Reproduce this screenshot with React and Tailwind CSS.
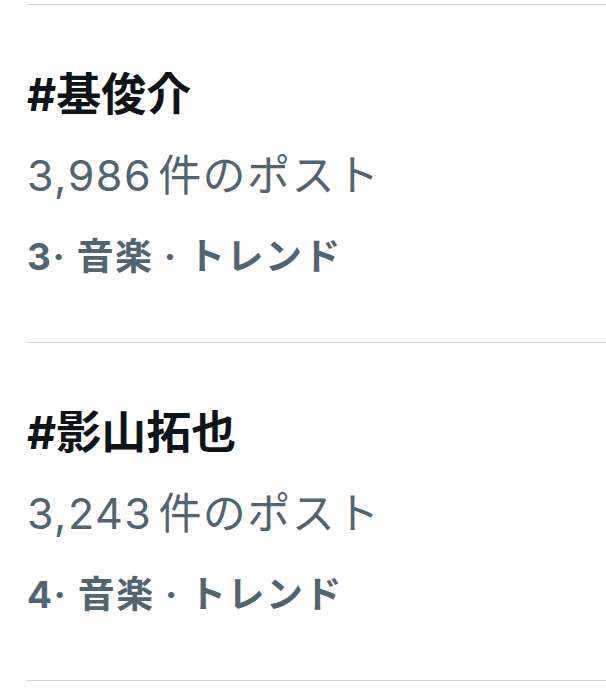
import React from "react";

const trends = [
  { tag: "#基俊介", count: "3,986", rank: "3", category: "音楽" },
  { tag: "#影山拓也", count: "3,243", rank: "4", category: "音楽" },
];

const TrendItem = ({ tag, count, rank, category }) => (
  <div className="border-t border-[#d3d6d9] pt-[50px] pb-[43px]">
    <div className="text-[45px] leading-[80px] font-bold text-[#0f1419]">{tag}</div>
    <div className="text-[43px] leading-[80px] tracking-[1.5px] text-[#536471]">
      <span className="mr-[6px]">{count}</span>件のポスト
    </div>
    <div className="text-[37px] leading-[84px] tracking-[1.5px] font-bold text-[#536471]">
      {rank}· {category} · トレンド
    </div>
  </div>
);

export default function App() {
  return (
    <div
      className="w-[606px] h-[691px] overflow-hidden bg-white pt-[4px] pl-[27px]"
      style={{ fontFamily: 'Inter, "Noto Sans CJK JP", sans-serif' }}
    >
      {trends.map((t) => (
        <TrendItem key={t.tag} {...t} />
      ))}
      <div className="border-t border-[#d3d6d9]" />
    </div>
  );
}
